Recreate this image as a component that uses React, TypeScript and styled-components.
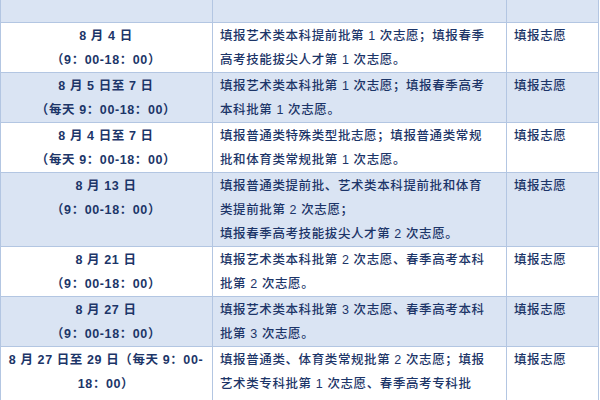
import React from "react"
import styled, { createGlobalStyle } from "styled-components"

const Global = createGlobalStyle`
  html, body { margin: 0; padding: 0; background: #ffffff; }
  body {
    width: 600px;
    height: 400px;
    overflow: hidden;
    font-family: "Liberation Sans", "Noto Sans CJK SC", sans-serif;
  }
`

const Table = styled.table`
  width: 598px;
  border-collapse: collapse;
  table-layout: fixed;
  margin-top: -1px;
  color: #1c3568;
  font-size: 12.5px;
`

const Row = styled.tr<{ $shaded?: boolean }>`
  background: ${p => (p.$shaded ? "#dae4f3" : "#ffffff")};
`

const Cell = styled.td<{ $center?: boolean; $bold?: boolean }>`
  border: 1px solid #b3c6e2;
  padding: 1px 8px 0 7px;
  line-height: 24px;
  vertical-align: top;
  text-align: ${p => (p.$center ? "center" : "left")};
  font-weight: ${p => (p.$bold ? 700 : 500)};
  letter-spacing: 0.6px;
  white-space: nowrap;
  overflow: hidden;
`

const HeaderCell = styled.td`
  border: 1px solid #b3c6e2;
  height: 22px;
  padding: 0;
`

type Item = { date: string[]; task: string[] }

const items: Item[] = [
  {
    date: ["8 月 4 日", "（9：00-18：00）"],
    task: ["填报艺术类本科提前批第 1 次志愿；填报春季", "高考技能拔尖人才第 1 次志愿。"]
  },
  {
    date: ["8 月 5 日至 7 日", "（每天 9：00-18：00）"],
    task: ["填报艺术类本科批第 1 次志愿；填报春季高考", "本科批第 1 次志愿。"]
  },
  {
    date: ["8 月 4 日至 7 日", "（每天 9：00-18：00）"],
    task: ["填报普通类特殊类型批志愿；填报普通类常规", "批和体育类常规批第 1 次志愿。"]
  },
  {
    date: ["8 月 13 日", "（9：00-18：00）"],
    task: ["填报普通类提前批、艺术类本科提前批和体育", "类提前批第 2 次志愿；", "填报春季高考技能拔尖人才第 2 次志愿。"]
  },
  {
    date: ["8 月 21 日", "（9：00-18：00）"],
    task: ["填报艺术类本科批第 2 次志愿、春季高考本科", "批第 2 次志愿。"]
  },
  {
    date: ["8 月 27 日", "（9：00-18：00）"],
    task: ["填报艺术类本科批第 3 次志愿、春季高考本科", "批第 3 次志愿。"]
  },
  {
    date: ["8 月 27 日至 29 日（每天 9：00-", "18：00）"],
    task: ["填报普通类、体育类常规批第 2 次志愿；填报", "艺术类专科批第 1 次志愿、春季高考专科批", "（含技能拔尖人才）第 1 次志愿。"]
  }
]

const lines = (arr: string[]) =>
  arr.map((t, i) => (
    <React.Fragment key={i}>
      {i > 0 && <br />}
      {t}
    </React.Fragment>
  ))

const App = () => (
  <>
    <Global />
    <Table>
      <colgroup>
        <col style={{ width: 212 }} />
        <col style={{ width: 294 }} />
        <col style={{ width: 92 }} />
      </colgroup>
      <tbody>
        <Row $shaded>
          <HeaderCell />
          <HeaderCell />
          <HeaderCell />
        </Row>
        {items.map((it, i) => (
          <Row key={i} $shaded={i % 2 === 1}>
            <Cell $center $bold>
              {lines(it.date)}
            </Cell>
            <Cell>{lines(it.task)}</Cell>
            <Cell>填报志愿</Cell>
          </Row>
        ))}
      </tbody>
    </Table>
  </>
)

export default App
